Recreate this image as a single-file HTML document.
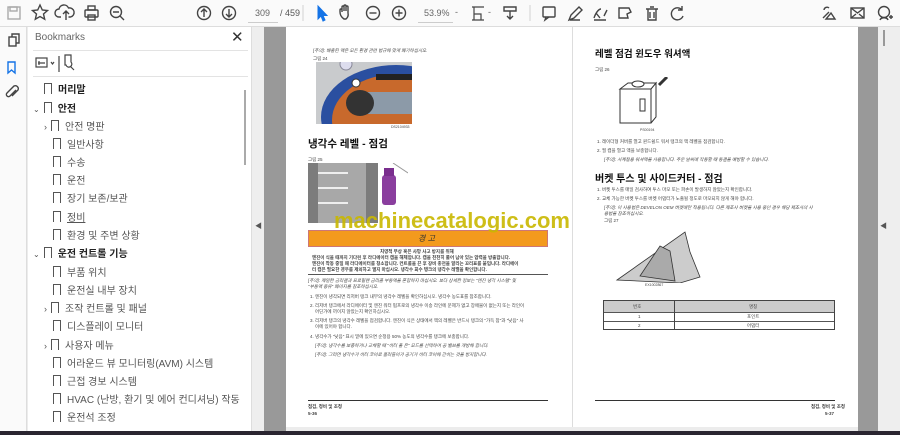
<!DOCTYPE html>
<html><head><meta charset="utf-8"><style>
*{margin:0;padding:0;box-sizing:border-box}
body{width:900px;height:435px;overflow:hidden;background:#ececec;font-family:"Liberation Sans","Noto Sans CJK KR",sans-serif;position:relative}
.a{position:absolute}
.tb{left:0;top:0;width:900px;height:27px;background:#fafafa;border-bottom:1px solid #ddd}
.t{position:absolute;white-space:nowrap;color:#444}
.bm{position:absolute;font-size:10px;color:#555;white-space:nowrap}
.bm b{font-weight:bold;color:#222}
.bk{display:inline-block;width:8px;height:11px;border:1.5px solid #555;border-bottom:none;vertical-align:-1px;margin-right:6px;position:relative}
.bk:after{content:"";position:absolute;left:0;bottom:0;width:0;height:0;border-left:2.5px solid transparent;border-right:2.5px solid transparent;border-bottom:3px solid #fff}
.pg{font-size:4.5px;color:#444;position:absolute;white-space:nowrap}
</style></head><body>
<div class="a tb"></div>
<svg class="a" style="left:0;top:0" width="900" height="27" fill="none" stroke="#444" stroke-width="1.4">
<rect x="8" y="7" width="12" height="12" stroke="#aaa"/><rect x="10" y="7" width="7" height="4" stroke="#aaa"/>
<path d="M40 5l2.3 5 5.2.5-4 3.5 1.2 5.2L40 16.5 35.3 19.2l1.2-5.2-4-3.5 5.2-.5z"/>
<path d="M61 17h-2a4 4 0 0 1 0-8 5 5 0 0 1 9.5-1 4 4 0 0 1 2 9h-2M66 11v9M63 14l3-3 3 3"/>
<rect x="85" y="10" width="13" height="7" rx="1"/><rect x="88" y="6" width="7" height="4"/><rect x="88" y="15" width="7" height="5"/>
<circle cx="116" cy="12" r="5.5"/><path d="M120 16l4 4M113 12h6"/>
<circle cx="204" cy="13" r="6.5"/><path d="M204 17v-8M201 12l3-3 3 3"/>
<circle cx="229" cy="13" r="6.5"/><path d="M229 9v8M226 14l3 3 3-3"/>
<path d="M303 5v16" stroke="#ddd"/>
<path d="M318 6v13l3-3 2 5 2-1-2-4.5h4z" fill="#1473e6" stroke="#1473e6" stroke-width="1"/>
<path d="M344 19c-3-2-4-5-4-7v-2a1 1 0 0 1 2 0v2V7a1 1 0 0 1 2 0v4V6a1 1 0 0 1 2 0v5V7a1 1 0 0 1 2 0v6a6 6 0 0 1-2 6z"/>
<circle cx="373" cy="13" r="6.5"/><path d="M369.5 13h7"/>
<circle cx="399" cy="13" r="6.5"/><path d="M395.5 13h7M399 9.5v7"/>
<path d="M472 7h12M472 20h12M474 7v13M474 14h7v6" stroke-width="1.2"/>
<path d="M504 7h12v4h-12zM510 11v8M507 16l3 3 3-3"/>
<path d="M530 5v16" stroke="#ddd"/>
<rect x="543" y="7" width="12" height="10" rx="1"/><path d="M546 17l-1 3 4-3"/>
<path d="M569 20l2-5 8-8 3 3-8 8zM570 20h10"/>
<path d="M594 18c2-6 5-9 7-9M596 13l4 5M604 16l3-6M594 20h12"/>
<path d="M619 8h10l2 4-4 2 1 4h-9z"/>
<path d="M646 9h12M648 9v11h8V9M650 7h4M650 12v6M654 12v6"/>
<path d="M682 10a6 6 0 1 0 1 6M682 6v4h-4"/>
<path d="M823 18l6-6M824 10a3 3 0 0 1 5-2M826 19h9l-4-6z"/>
<rect x="851" y="8" width="13" height="10"/><path d="M851 8l6.5 5 6.5-5M851 18l5-4M864 18l-5-4"/>
<circle cx="884" cy="12" r="5.5"/><path d="M880 20c1-3 7-3 8 0M889 17h4M891 15v4"/>
</svg>
<div class="t" style="left:255px;top:8px;font-size:9px;color:#666">309</div>
<div class="a" style="left:248px;top:22px;width:30px;height:1px;background:#ccc"></div>
<div class="t" style="left:280px;top:8px;font-size:9px;color:#555">/ 459</div>
<div class="t" style="left:424px;top:8px;font-size:9px;color:#666">53.9%</div>
<div class="a" style="left:418px;top:22px;width:35px;height:1px;background:#ccc"></div>
<div class="t" style="left:455px;top:7px;font-size:9px;color:#666">-</div>
<div class="t" style="left:488px;top:7px;font-size:9px;color:#666">-</div>

<div class="a" style="left:0;top:27px;width:27px;height:404px;background:#fafafa;border-right:1px solid #ddd"></div>
<svg class="a" style="left:0;top:27px" width="27" height="80" fill="none" stroke="#444" stroke-width="1.4">
<rect x="9" y="10" width="7" height="9"/><path d="M12 10V7h7v9h-3"/>
<path d="M8 35v11l3.5-3 3.5 3V35z" stroke="#1473e6"/>
<path d="M16 63l-6 6a2 2 0 0 1-3-3l7-7a3 3 0 0 1 4 4l-6 6" />
</svg>

<div class="a" style="left:28px;top:27px;width:225px;height:404px;background:#fff"></div>
<div class="t" style="left:35px;top:32px;font-size:10px;color:#666">Bookmarks</div>
<div class="t" style="left:231px;top:28px;font-size:15px;color:#333">✕</div>
<div class="a" style="left:33px;top:50px;width:215px;height:1px;background:#e3e3e3"></div>
<svg class="a" style="left:33px;top:52px" width="60" height="22" fill="none" stroke="#444" stroke-width="1.2">
<rect x="3" y="6" width="11" height="9"/><path d="M5 11h7M6 9v4M18 10l1.5 2 1.5-2"/>
<path d="M26 4v16M32 3h6v7a3 3 0 1 1-5 3l-1 0zM37 14l4 4"/>
</svg>
<div class="a" style="left:33px;top:76px;width:215px;height:1px;background:#e3e3e3"></div>
<div class="a" style="left:244px;top:90px;width:2px;height:75px;background:#aaa"></div>
<div class="a" style="left:251px;top:27px;width:1px;height:404px;background:#ddd"></div>
<div class="a" style="left:252px;top:27px;width:12px;height:404px;background:#eeeeee"></div>
<div class="t" style="left:255px;top:221px;font-size:7px;color:#555">◀</div>

<div class="bm" style="left:44px;top:81px"><span class="bk"></span><b>머리말</b></div>
<div class="bm" style="left:33px;top:100px"><span style="font-size:8px;margin-right:4px">⌄</span><span class="bk"></span><b>안전</b></div>
<div class="bm" style="left:44px;top:118px"><span style="font-size:9px;margin-right:4px">›</span><span class="bk"></span>안전 명판</div>
<div class="bm" style="left:53px;top:136px"><span class="bk"></span>일반사항</div>
<div class="bm" style="left:53px;top:154px"><span class="bk"></span>수송</div>
<div class="bm" style="left:53px;top:172px"><span class="bk"></span>운전</div>
<div class="bm" style="left:53px;top:190px"><span class="bk"></span>장기 보존/보관</div>
<div class="bm" style="left:53px;top:209px"><span class="bk"></span><u>정비</u></div>
<div class="bm" style="left:53px;top:227px"><span class="bk"></span>환경 및 주변 상황</div>
<div class="bm" style="left:33px;top:245px"><span style="font-size:8px;margin-right:4px">⌄</span><span class="bk"></span><b>운전 컨트롤 기능</b></div>
<div class="bm" style="left:53px;top:264px"><span class="bk"></span>부품 위치</div>
<div class="bm" style="left:53px;top:282px"><span class="bk"></span>운전실 내부 장치</div>
<div class="bm" style="left:44px;top:300px"><span style="font-size:9px;margin-right:4px">›</span><span class="bk"></span>조작 컨트롤 및 패널</div>
<div class="bm" style="left:53px;top:318px"><span class="bk"></span>디스플레이 모니터</div>
<div class="bm" style="left:44px;top:337px"><span style="font-size:9px;margin-right:4px">›</span><span class="bk"></span>사용자 메뉴</div>
<div class="bm" style="left:53px;top:355px"><span class="bk"></span>어라운드 뷰 모니터링(AVM) 시스템</div>
<div class="bm" style="left:53px;top:373px"><span class="bk"></span>근접 경보 시스템</div>
<div class="bm" style="left:53px;top:391px"><span class="bk"></span>HVAC (난방, 환기 및 에어 컨디셔닝) 작동</div>
<div class="bm" style="left:53px;top:409px"><span class="bk"></span>운전석 조정</div>

<div class="a" style="left:264px;top:27px;width:22px;height:404px;background:#999"></div>
<div class="a" style="left:286px;top:27px;width:286px;height:400px;background:#fff"></div>
<div class="a" style="left:572px;top:27px;width:1px;height:400px;background:#ddd"></div>
<div class="a" style="left:573px;top:27px;width:285px;height:400px;background:#fff"></div>
<div class="a" style="left:858px;top:27px;width:20px;height:404px;background:#999"></div>
<div class="a" style="left:878px;top:27px;width:22px;height:404px;background:#eeeeee"></div>
<div class="a" style="left:883px;top:30px;width:2px;height:16px;background:#999"></div>
<div class="t" style="left:880px;top:221px;font-size:7px;color:#555">◀</div>
<div class="a" style="left:0;top:431px;width:900px;height:4px;background:#2a2530"></div>

<div class="pg" style="left:313px;top:48px"><i>[주의]: 배출된 액은 모든 환경 관련 법규에 맞게 폐기하십시오.</i></div>
<div class="pg" style="left:313px;top:56px">그림 24</div>
<svg class="a" style="left:316px;top:62px" width="96" height="62">
<rect width="96" height="62" fill="#c9cbcd"/>
<ellipse cx="80" cy="55" rx="75" ry="52" fill="#2a4fa0"/>
<ellipse cx="82" cy="58" rx="66" ry="46" fill="#c8692c"/>
<rect x="42" y="30" width="54" height="22" fill="#8c9aa8"/>
<ellipse cx="44" cy="41" rx="14" ry="13" fill="#333"/>
<rect x="60" y="12" width="36" height="6" fill="#222"/><circle cx="40" cy="21" r="4" fill="#fff" stroke="#333"/>
<circle cx="30" cy="2" r="6" fill="#dde" stroke="#889"/>
</svg>
<div class="pg" style="left:391px;top:125px;font-size:3.5px">DS2104933</div>
<div class="t" style="left:308px;top:136px;font-size:10.5px;font-weight:bold;color:#111">냉각수 레벨 - 점검</div>
<div class="pg" style="left:308px;top:157px">그림 25</div>
<svg class="a" style="left:308px;top:163px" width="100" height="60">
<rect width="70" height="60" fill="#7c7c7c"/>
<rect x="10" y="0" width="48" height="60" fill="#a8a8a8"/>
<path d="M10 10h30M10 25h30M10 40h30" stroke="#eee" stroke-width="2"/>
<rect x="74" y="12" width="14" height="30" rx="3" fill="#8a3e9e"/>
<rect x="76" y="5" width="10" height="8" fill="#7a2e8e"/>
<path d="M85 0l15 10" stroke="#999"/>
</svg>
<div class="a" style="left:308px;top:230px;width:240px;height:17px;background:#f39a1d;border:1px solid #c77"></div>
<div class="t" style="left:418px;top:233px;font-size:8px;font-style:italic;color:#333">경 고</div>
<div class="t" style="left:334px;top:208px;font-size:22px;font-weight:bold;color:#c9b800;opacity:.9">machinecatalogic.com</div>
<div class="pg" style="left:380px;top:249px;font-weight:bold">치명적 부상 혹은 사망 사고 방지를 위해</div>
<div class="pg" style="left:312px;top:255px;font-weight:bold">엔진이 식을 때까지 기다린 후 라디에이터 캡을 해체합니다. 캡을 천천히 풀어 남아 있는 압력을 방출합니다.</div>
<div class="pg" style="left:312px;top:261px;font-weight:bold">엔진이 작동 중일 때 라디에이터를 청소합니다. 컨트롤을 끈 후 장비 충전을 알리는 꼬리표를 붙입니다. 라디에이</div>
<div class="pg" style="left:312px;top:267px;font-weight:bold">터 캡은 필요한 경우를 제외하고 열지 마십시오. 냉각수 회수 탱크의 냉각수 레벨을 확인합니다.</div>
<div class="a" style="left:308px;top:274px;width:240px;height:1px;background:#555"></div>
<div class="pg" style="left:308px;top:278px"><i>[주의]: 제일한 금리결과 프로필렌 금리콜 부동액을 혼합하지 마십시오. 보다 상세한 정보는 "엔진 냉각 시스템" 및</i></div>
<div class="pg" style="left:308px;top:284px"><i>"부동액 종류" 페이지를 참조하십시오.</i></div>
<div class="pg" style="left:310px;top:294px">1. 엔진이 냉각되면 리저버 탱크 내부의 냉각수 레벨을 확인하십시오. 냉각수 농도표를 참조합니다.</div>
<div class="pg" style="left:310px;top:303px">2. 리저버 탱크에서 라디에이터 및 엔진 워터 펌프로의 냉각수 이송 라인에 문제가 없고 장애물이 없는지 또는 라인이</div>
<div class="pg" style="left:315px;top:309px">어딘가에 끼이지 않았는지 확인하십시오.</div>
<div class="pg" style="left:310px;top:318px">3. 리저버 탱크의 냉각수 레벨을 점검합니다. 엔진이 식은 상태에서 액의 레벨은 반드시 탱크의 "가득 참"과 "낮음" 사</div>
<div class="pg" style="left:315px;top:324px">이에 있어야 합니다.</div>
<div class="pg" style="left:310px;top:334px">4. 냉각수가 "낮음" 표시 밑에 있으면 순정용 50% 농도의 냉각수를 탱크에 보충합니다.</div>
<div class="pg" style="left:315px;top:343px"><i>[주의]: 냉각수를 보충하거나 교체할 때 "히터 풀 온" 모드를 선택하여 공 밸브를 개방해 합니다.</i></div>
<div class="pg" style="left:315px;top:352px"><i>[주의]: 그러면 냉각수가 히터 코어로 흘러들어가 공기가 히터 코어에 갇히는 것을 방지합니다.</i></div>
<div class="a" style="left:308px;top:400px;width:240px;height:1px;background:#333"></div>
<div class="pg" style="left:308px;top:404px;font-weight:bold">점검, 정비 및 조정</div>
<div class="pg" style="left:308px;top:411px;font-weight:bold">5-36</div>

<div class="t" style="left:595px;top:46px;font-size:9.5px;font-weight:bold;color:#111">레벨 점검 윈도우 워셔액</div>
<div class="pg" style="left:595px;top:67px">그림 26</div>
<svg class="a" style="left:615px;top:77px" width="55" height="50" fill="#fff" stroke="#333" stroke-width="1">
<path d="M5 12l8-6h28l-5 6zM5 12v34h31V12M36 12l5-6v34l-5 6"/>
<ellipse cx="23" cy="7" rx="6" ry="3"/><rect x="25" y="22" width="5" height="12"/>
<path d="M52 0l-8 8" stroke-width="3"/>
</svg>
<div class="pg" style="left:640px;top:128px;font-size:3.5px">PS00194</div>
<div class="pg" style="left:597px;top:139px">1. 레이더형 커버를 열고 윈드쉴드 워셔 탱크의 액 레벨을 점검합니다.</div>
<div class="pg" style="left:597px;top:148px">2. 필 캡을 열고 액을 보충합니다.</div>
<div class="pg" style="left:604px;top:157px"><i>[주의]: 사계절용 워셔액을 사용합니다. 추운 날씨에 작동할 때 동결을 예방할 수 있습니다.</i></div>
<div class="t" style="left:595px;top:170px;font-size:10px;font-weight:bold;color:#111">버켓 투스 및 사이드커터 - 점검</div>
<div class="pg" style="left:597px;top:187px">1. 버켓 투스를 매일 검사하여 투스 마모 또는 파손이 발생하지 않았는지 확인합니다.</div>
<div class="pg" style="left:597px;top:196px">2. 교체 가능한 버켓 투스를 버켓 어댑터가 노출될 정도로 마모되지 않게 해야 합니다.</div>
<div class="pg" style="left:604px;top:205px"><i>[주의]: 이 사용법은 DEVELON OEM 버켓에만 적용됩니다. 다른 제조사 버켓을 사용 중인 경우 해당 제조사의 사</i></div>
<div class="pg" style="left:604px;top:211px"><i>용법을 참조하십시오.</i></div>
<div class="pg" style="left:604px;top:218px">그림 27</div>
<svg class="a" style="left:615px;top:228px" width="90" height="55" fill="#ccc" stroke="#333" stroke-width=".8">
<path d="M2 52L70 4l5 20 10 25-20 6z"/>
<path d="M25 48l20-30 10 5 5 30z" fill="#aaa"/>
</svg>
<div class="pg" style="left:645px;top:283px;font-size:3.5px">EX1002867</div>
<div class="a" style="left:603px;top:300px;width:232px;height:30px;border:1px solid #444"></div>
<div class="a" style="left:604px;top:301px;width:230px;height:11px;background:#ccc"></div>
<div class="a" style="left:604px;top:312px;width:230px;height:1px;background:#555"></div>
<div class="a" style="left:604px;top:321px;width:230px;height:1px;background:#555"></div>
<div class="a" style="left:674px;top:301px;width:1px;height:29px;background:#444"></div>
<div class="pg" style="left:633px;top:304px">번호</div>
<div class="pg" style="left:749px;top:304px">명칭</div>
<div class="pg" style="left:638px;top:314px">1</div>
<div class="pg" style="left:747px;top:314px">포인트</div>
<div class="pg" style="left:638px;top:323px">2</div>
<div class="pg" style="left:747px;top:323px">어댑터</div>
<div class="a" style="left:595px;top:400px;width:240px;height:1px;background:#333"></div>
<div class="pg" style="left:811px;top:404px;font-weight:bold">점검, 정비 및 조정</div>
<div class="pg" style="left:825px;top:411px;font-weight:bold">5-37</div>
</body></html>
